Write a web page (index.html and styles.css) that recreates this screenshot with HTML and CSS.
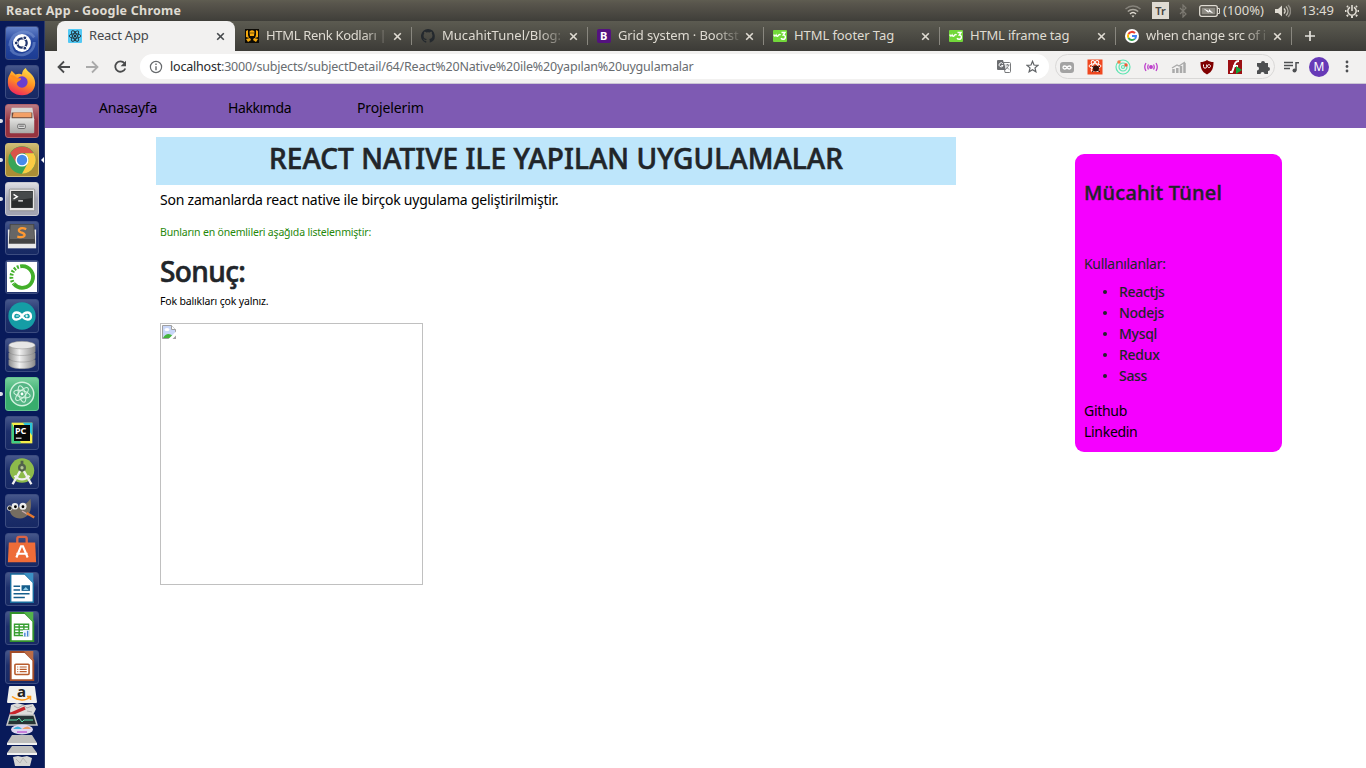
FILE: index.html
```html
<!DOCTYPE html>
<html lang="tr">
<head>
<meta charset="utf-8">
<title>React App</title>
<link rel="stylesheet" href="styles.css">
</head>
<body>
<svg width="0" height="0" class="defs">
  <defs>
    <linearGradient id="steel" x1="0" y1="0" x2="1" y2="0"><stop offset="0" stop-color="#8e8e8e"/><stop offset=".4" stop-color="#f2f2f2"/><stop offset="1" stop-color="#8a8a8a"/></linearGradient>
    <linearGradient id="flame" x1=".7" y1="0" x2=".3" y2="1"><stop offset="0" stop-color="#ffe14a"/><stop offset=".5" stop-color="#ff9322"/><stop offset="1" stop-color="#f0245e"/></linearGradient>
    <linearGradient id="grey" x1="0" y1="0" x2="0" y2="1"><stop offset="0" stop-color="#e4e4e2"/><stop offset="1" stop-color="#a9a9a7"/></linearGradient>
    <symbol id="x" viewBox="0 0 9 9"><path d="M1.200 1.200l6.600 6.600M7.800 1.200l-6.600 6.600" stroke="currentColor" stroke-width="1.600"/></symbol>
    <symbol id="w3" viewBox="0 0 14 12"><rect width="14" height="12" rx="1" fill="#72d83a"/><path d="M.8 4.500q1 2.800 2.300.5 1 2.400 2.300.3.800-1.300 2.200-.3M8.500 2.500H12L10.300 5c3 0 2.600 4.300-.2 4.300-1 0-1.700-.5-2-1.200" fill="none" stroke="#fff" stroke-width="1.400"/></symbol>
  </defs>
</svg>
<header class="panel">
  <span class="panel-title">React App - Google Chrome</span>
  <div class="tray">
    <svg class="i-wifi" width="18" height="14" viewBox="0 0 18 14" fill="none" stroke-width="1.500"><path d="M1.500 5C6 1 12 1 16.500 5" stroke="#85827a"/><path d="M3.800 7.500c3-2.800 7.400-2.800 10.400 0" stroke="#aaa79e"/><path d="M6 10c1.800-1.700 4.200-1.700 6 0" stroke="#dfdbd2"/><path d="M7.500 11.500h3L9 13.500z" fill="#dfdbd2"/></svg>
    <span class="kbd">Tr</span>
    <svg class="i-bt" width="8" height="14" viewBox="0 0 8 14" fill="none" stroke="#7d7a72" stroke-width="1.200"><path d="M1 4l6 6-3 3V1l3 3-6 6"/></svg>
    <svg class="i-bat" width="21" height="12" viewBox="0 0 21 12"><rect x=".7" y=".7" width="17.600" height="10.600" rx="2" fill="none" stroke="#dfdbd2" stroke-width="1.300"/><rect x="2.700" y="2.700" width="13.600" height="6.600" fill="#8d8a82"/><path d="M19 3.500h1.500v5H19" fill="none" stroke="#dfdbd2"/><path d="M4.500 3.500L10 6V4l4.500 4.500-5-2V8z" fill="#fff"/></svg>
    <span class="battery">(100%)</span>
    <svg class="i-vol" width="17" height="14" viewBox="0 0 17 14" fill="none" stroke="#dfdbd2" stroke-width="1.400"><path d="M1 5h3l4-3.500v11L4 9H1z" fill="#dfdbd2" stroke="none"/><path d="M10 4.500c1.500 1.500 1.500 3.500 0 5"/><path d="M12 2.500c2.600 2.700 2.600 6.300 0 9" stroke="#b5b2a9"/><path d="M14 1c3.300 3.700 3.300 8.300 0 12" stroke="#8d8a82"/></svg>
    <span class="clock">13:49</span>
    <svg class="i-gear" width="14" height="14" viewBox="0 0 14 14" fill="none" stroke="#dfdbd2"><path d="M5 3.300a4.200 4.200 0 1 0 4 0M7 1v6" stroke-width="1.600"/><path d="M1.500 7H0M14 7h-1.500M3 3L2 2M11 3l1-1M3 11l-1.200 1.200M11 11l1.200 1.200M7 12v2" stroke-width="2"/></svg>
  </div>
</header>
<div class="desktop">
<aside class="launcher">
  <div class="tile blue"><svg viewBox="0 0 34 34"><path d="M4 20C4 6 22 0 30 11M30 16c0 14-18 18-25 8M8 27C-1 14 12 3 24 6" fill="none" stroke="#7f9bd6" stroke-width="3" opacity=".5"/><circle cx="17" cy="17" r="9.500" fill="#fff"/><circle cx="17" cy="17" r="5" fill="none" stroke="#20356d" stroke-width="2.400"/><g fill="#20356d" stroke="#fff"><circle cx="10.800" cy="17" r="2"/><circle cx="20" cy="11.500" r="2"/><circle cx="20" cy="22.500" r="2"/></g></svg></div>
  <div class="tile"><svg viewBox="0 0 34 34"><path d="M3 11l3-6 4 4c3-1 5-1 7 0 0-3 2-6 4-7 2 5 10 7 10 16 0 8-6 13-14 13S2 26 2 18c0-3 0-5 1-7z" fill="url(#flame)"/><circle cx="17" cy="17" r="6" fill="#6b3ed0"/><path d="M4 10c4-1 6 1 8 3h4c0 3-4 3-5 6-3-3-4-6-7-9z" fill="#ff8a1e"/></svg></div>
  <div class="tile red run"><svg viewBox="0 0 34 34"><path d="M6 3h22l2 13H4z" fill="#d8d8d6"/><path d="M6 8h22v7H6z" fill="#68483c"/><path d="M8 8h19v5H7z" fill="#f3a067"/><rect x="4" y="14" width="26" height="16" rx="1" fill="url(#grey)"/><rect x="12.500" y="20.500" width="8" height="4.500" rx="1" fill="#ddd" stroke="#666"/><path d="M14 22.500h5" stroke="#555"/></svg></div>
  <div class="tile gold run active"><svg viewBox="0 0 34 34"><circle cx="17" cy="17" r="14.500" fill="#38a557"/><path d="M4.500 9.700a14.500 14.500 0 0 1 25 0H17a7 7 0 0 0-6 3.500v7z" fill="#d9544a"/><path d="M29.500 9.700A14.500 14.500 0 0 1 17 31.500l6-11A7 7 0 0 0 23 13.500L20 9.700z" fill="#fbcb43"/><circle cx="17" cy="17" r="7" fill="#fff"/><circle cx="17" cy="17" r="5.500" fill="#478bea"/></svg></div>
  <div class="tile silver run"><svg viewBox="0 0 34 34"><rect x="3.500" y="6.500" width="27" height="23" rx="1" fill="#e6e6e6" stroke="#909090"/><path d="M5.500 8.500h23v18h-23z" fill="#292c2d"/><path d="M6 9h22v7L6 19z" fill="#464a4b"/><path d="M8 12l4 2.500L8 17M13 19h5" fill="none" stroke="#fff" stroke-width="1.500"/></svg></div>
  <div class="tile"><svg viewBox="0 0 34 34"><path d="M2 8h30v20H2z" fill="#e9e9e9"/><path d="M4 2h26l1 21H3z" fill="#444"/><path d="M5 3h24l1 15H4z" fill="#666"/><path d="M21.500 7.500c-7-3-10.500 2-5.500 3.500 6 1.500 5 6.500-4 4.500" fill="none" stroke="#ff9a32" stroke-width="2.500"/></svg></div>
  <div class="tile"><svg viewBox="0 0 34 34"><path d="M1 1h32v32H1z" fill="#fff"/><path d="M17 5.500a11.500 11.500 0 1 1-8.500 19" fill="none" stroke="#43b02a" stroke-width="4"/><path d="M17 5.500A11.500 11.500 0 0 0 8.500 24.500" fill="none" stroke="#43b02a" stroke-width="4" stroke-dasharray="2 1.500"/></svg></div>
  <div class="tile"><svg viewBox="0 0 34 34"><circle cx="17" cy="17" r="14.500" fill="#159da5"/><path d="M17 17c-3-5-9-5-9.500 0S14 22 17 17s9-5 9.500 0S20 22 17 17z" fill="none" stroke="#fff" stroke-width="2.500"/><path d="M10.500 17h3M20.500 17h3M22 15.500v3" stroke="#fff"/></svg></div>
  <div class="tile"><svg viewBox="0 0 34 34"><g fill="url(#steel)" stroke="#888" stroke-width=".5"><path d="M3 22v5c0 6 28 6 28 0v-5z"/><path d="M3 15v5c0 6 28 6 28 0v-5z"/><path d="M3 7v6c0 6 28 6 28 0V7z"/><ellipse cx="17" cy="6.500" rx="14" ry="4" fill="#e6e6e6"/></g></svg></div>
  <div class="tile green run"><svg viewBox="0 0 34 34"><circle cx="17" cy="17" r="12.500" fill="#55b585" stroke="#d3f3df" stroke-width="1.500"/><g fill="none" stroke="#d3f3df" stroke-width="1.100"><ellipse cx="17" cy="17" rx="9" ry="3.500" transform="rotate(15 17 17)"/><ellipse cx="17" cy="17" rx="9" ry="3.500" transform="rotate(75 17 17)"/><ellipse cx="17" cy="17" rx="9" ry="3.500" transform="rotate(135 17 17)"/></g><circle cx="17" cy="17" r="1.500" fill="#fff"/></svg></div>
  <div class="tile"><svg viewBox="0 0 34 34"><path d="M6 6h22v22H6z" fill="#f5ed49"/><path d="M18 6h10v14z" fill="#2ac2da"/><path d="M6 6v22h10z" fill="#40cf83"/><path d="M8.500 8.500h17v17h-17z" fill="#080808"/><path d="M10.500 22.500h6" stroke="#fff" stroke-width="1.200"/><text x="9.500" y="18.500" class="t-pc">PC</text></svg></div>
  <div class="tile"><svg viewBox="0 0 34 34"><circle cx="17" cy="15.500" r="13" fill="#8dbb4b"/><circle cx="17" cy="12.500" r="3" fill="#b5c597" stroke="#52634c" stroke-width="2.500"/><path d="M17 5v4" stroke="#52634c" stroke-width="3"/><path d="M15 16L7 30M19 16l8 14M9 21c5 5 11 5 16 0" fill="none" stroke="#f0f0f0" stroke-width="2.500"/></svg></div>
  <div class="tile"><svg viewBox="0 0 34 34"><path d="M5 12c7 3 15 0 21-8 2 12-1 20-11 21C7 25 2 19 5 12z" fill="#756d61"/><circle cx="9.500" cy="12" r="3.500" fill="#eee"/><circle cx="18" cy="12" r="3.800" fill="#eee"/><circle cx="10" cy="12.500" r="1.500"/><circle cx="18" cy="12.500" r="1.500"/><circle cx="4" cy="14" r="2.500" fill="#222" stroke="#ddd"/><path d="M17 17l7 4" stroke="#caa" stroke-width="1.500"/><path d="M22 19l8 5" stroke="#e57a30" stroke-width="2.500"/></svg></div>
  <div class="tile"><svg viewBox="0 0 34 34"><path d="M12 11V5q0-2 2-2h6q2 0 2 2v6" fill="none" stroke="#dc6445" stroke-width="2.500"/><path d="M3 9h28l1 21H2z" fill="#ee6c38"/><path d="M11 25l5-12h2l5 12M11 21h12" fill="none" stroke="#fff" stroke-width="2.300"/></svg></div>
  <div class="tile"><svg viewBox="0 0 34 34"><path d="M5 1h15l9 9v21H5z" fill="#fff" stroke="#176b9d" stroke-width="1.500"/><path d="M19 0h10v11z" fill="#3b91c4"/><path d="M8 14h7M8 18h7M8 22h17M8 26h12" stroke="#155e8c" stroke-width="1.700"/><path d="M16.500 13h9v6h-9z" fill="#155e8c"/><path d="M18 18l3-3 3 3z" fill="#8ccbe8"/></svg></div>
  <div class="tile"><svg viewBox="0 0 34 34"><path d="M5 1h15l9 9v21H5z" fill="#fff" stroke="#33912b" stroke-width="2"/><path d="M19 0h10v11z" fill="#53b34b"/><path d="M9 13h15v12H9zM9 16h15M9 19h15M9 22h15M14 13v12M19 13v12" fill="none" stroke="#369e30" stroke-width="1.500"/><path d="M18 19h7v7h-7z" fill="#eef6ff"/><path d="M20 26v-4M23 26v-6" stroke="#4a86d5" stroke-width="1.500"/></svg></div>
  <div class="tile"><svg viewBox="0 0 34 34"><path d="M5 1h15l9 9v21H5z" fill="#fff" stroke="#a44d28" stroke-width="2"/><path d="M19 0h10v11z" fill="#bb6c46"/><rect x="9.500" y="14" width="15" height="11" rx="1" fill="#fff" stroke="#b85c2d" stroke-width="1.700"/><path d="M12 17h1M14.500 17h7.500M12 19.500h1M14.500 19.500h7.500M12 22h1M14.500 22h7.500" stroke="#b85c2d" stroke-width="1.300"/></svg></div>
  <svg class="stack" width="34" height="83" viewBox="0 0 34 83">
    <path d="M5 2h24q1 0 1 1l2 15q0 1-1 1H3q-1 0-1-1L4 3q0-1 1-1z" fill="#f1f1ee"/><text x="12" y="12.500" class="t-amazon">a</text><path d="M7 12.500c6 4.500 14 4.500 18 .5M25.500 16v-3.500H22" fill="none" stroke="#ff9917" stroke-width="1.500"/>
    <path d="M6 21l6-2 8 2 8-1 3 5-3 6H6l-1-4z" fill="#dcdcda"/><path d="M9 22l4 2 5-3 4 3 5-2M22 27l5 1" fill="none" stroke="#aaa"/><path d="M5 30.500L20 24" stroke="#c9252b" stroke-width="3.500"/>
    <path d="M5 31h24l3 10H2z" fill="#263334" stroke="#c8c8c8" stroke-width="1.500"/><path d="M4 36h8l2-2 3 4 2-2h9" fill="none" stroke="#60dfad"/>
    <ellipse cx="17" cy="45.500" rx="11" ry="5" fill="#ddd7f0"/><path d="M8 45q5-5 9 0z" fill="#43b5de"/><path d="M17 45q6-5 9 0z" fill="#eda06d"/><path d="M12 48h10" stroke="#c77fda" stroke-width="2"/>
    <path d="M7 51h20l5 8H2z" fill="#bebebc"/><path d="M2 59h30v2H2z" fill="#f0f0f0"/><path d="M7 62h20l5 7H2z" fill="#bebebc"/><path d="M2 69h30v2H2z" fill="#f0f0f0"/>
    <path d="M8 73l5-1 4 1 5-1 5 2-2 8H10z" fill="#d5d5d3"/><path d="M11 75l4 4 3-5 4 5" fill="none" stroke="#b5b5b5"/>
  </svg>
</aside>
<main class="window">
  <div class="tabs">
    <div class="tab current"><svg width="14" height="14" viewBox="0 0 14 14"><rect width="14" height="14" rx="1" fill="#52c8f4"/><g fill="none" stroke="#20333d" stroke-width=".9"><ellipse cx="7" cy="7" rx="5.800" ry="2.300"/><ellipse cx="7" cy="7" rx="5.800" ry="2.300" transform="rotate(60 7 7)"/><ellipse cx="7" cy="7" rx="5.800" ry="2.300" transform="rotate(120 7 7)"/></g><circle cx="7" cy="7" r="1.200" fill="#20333d"/></svg><span class="tab-name n1">React App</span><svg class="close"><use href="#x"/></svg></div>
    <div class="tab"><svg width="14" height="14" viewBox="0 0 14 14"><path d="M0 0h14v14H0z" fill="#0c0a05"/><g fill="#f5a90d"><path d="M4.500 2.500Q7 0 9.500 2.500L9 7H5zM1 2l2-1v5l1 3-3-1zM13 2l-2-1v5l-1 3 3-1zM1 10l4-1 1 2-3 2zM13 10L9 9l-1 2 3 2z"/></g><path d="M5.500 3.500h1v1h-1zM7.500 3.500h1v1h-1z"/></svg><span class="tab-name n2 fade">HTML Renk Kodları |</span><svg class="close"><use href="#x"/></svg></div>
    <div class="tab"><svg width="14" height="14" viewBox="0 0 16 16"><path d="M8 0a8 8 0 0 0-2.500 15.600c.4 0 .5-.2.500-.4v-1.500c-2.200.5-2.700-1-2.700-1-.4-.9-.9-1.200-.9-1.200-.7-.5.100-.5.100-.5.800.1 1.200.8 1.200.8.700 1.300 1.900.9 2.300.7.100-.5.300-.9.500-1.100-1.800-.2-3.600-.9-3.600-4 0-.9.300-1.600.8-2.100-.1-.2-.4-1 .1-2.100 0 0 .7-.2 2.200.8a7.600 7.600 0 0 1 4 0c1.500-1 2.200-.8 2.200-.8.400 1.100.2 1.900.1 2.100.5.600.8 1.300.8 2.200 0 3.100-1.900 3.700-3.700 3.900.3.300.6.800.6 1.500v2.200c0 .2.100.5.500.4A8 8 0 0 0 8 0z" fill="#24292e"/></svg><span class="tab-name n3 fade">MucahitTunel/Blog:</span><svg class="close"><use href="#x"/></svg></div>
    <div class="tab"><svg width="14" height="14" viewBox="0 0 14 14"><rect width="14" height="14" rx="2" fill="#54127f"/><text x="3" y="11" class="t-b">B</text></svg><span class="tab-name n4 fade">Grid system · Bootst</span><svg class="close"><use href="#x"/></svg></div>
    <div class="tab"><svg width="14" height="12"><use href="#w3"/></svg><span class="tab-name n5">HTML footer Tag</span><svg class="close"><use href="#x"/></svg></div>
    <div class="tab"><svg width="14" height="12"><use href="#w3"/></svg><span class="tab-name n6">HTML iframe tag</span><svg class="close"><use href="#x"/></svg></div>
    <div class="tab"><svg width="14" height="14" viewBox="0 0 14 14"><circle cx="7" cy="7" r="7" fill="#fff"/><g fill="none" stroke-width="2"><path d="M3.500 5A4 4 0 0 1 10 4.200" stroke="#ea4335"/><path d="M3.500 9a4 4 0 0 1 0-4" stroke="#fbbc05"/><path d="M9.800 9.900A4 4 0 0 1 3.500 9" stroke="#34a853"/><path d="M7 7h4a4 4 0 0 1-1.200 2.900" stroke="#4285f4"/></g></svg><span class="tab-name n7 fade">when change src of i</span><svg class="close"><use href="#x"/></svg></div>
    <svg class="plus" width="12" height="12"><path d="M6 1v10M1 6h10" stroke="#e4e2dc" stroke-width="1.700"/></svg>
  </div>
  <div class="toolbar">
    <svg class="nav-icons" width="72" height="14" viewBox="0 0 72 14" fill="none" stroke-width="1.800"><path d="M13 7H2M7 1.500L1.500 7 7 12.500" stroke="#4a4b4c"/><path d="M29 7h11M35 1.500L40.500 7 35 12.500" stroke="#aaa"/><path d="M67.500 3.200A5.200 5.200 0 1 0 68.300 8.500" stroke="#4a4b4c"/><path d="M69 .8v5.400h-5.400z" fill="#4a4b4c"/></svg>
    <div class="omnibox">
      <svg width="14" height="14" viewBox="0 0 14 14"><circle cx="7" cy="7" r="5.600" fill="none" stroke="#66696c" stroke-width="1.200"/><path d="M7 6.200v4M7 3.600v1.500" stroke="#66696c" stroke-width="1.400"/></svg>
      <span class="url"><b>localhost</b>:3000/subjects/subjectDetail/64/React%20Native%20ile%20yapılan%20uygulamalar</span>
      <svg class="translate" width="14" height="13" viewBox="0 0 14 13"><path d="M6.500 2.500h6q1 0 1 1v8q0 1-1 1H8z" fill="#fff" stroke="#77797b"/><path d="M1 0h5l3 10H1q-1 0-1-1V1q0-1 1-1z" fill="#6b6d70"/><path d="M5.800 3.800A2 2 0 1 0 6 5.500H4.300" fill="none" stroke="#fff"/><path d="M8.500 5h4M10.500 4v1M9 9c1.500-1 2.300-2.500 2.500-4M9 6.500l3 3" fill="none" stroke="#77797b" stroke-width=".9"/></svg>
      <svg class="star" width="13" height="13" viewBox="0 0 13 13"><path d="M6.500 1.300l1.500 3.700 4 .3-3 2.600.9 3.900-3.400-2.100-3.400 2.100.9-3.900-3-2.600 4-.3z" fill="none" stroke="#606366" stroke-width="1.200"/></svg>
    </div>
    <div class="exts">
      <svg viewBox="0 0 16 16"><rect x="1" y="3" width="14" height="11" rx="3" fill="#a3a3a3"/><path d="M8 8.500c-1-2-4-2-4 0s3 2 4 0 4-2 4 0-3 2-4 0z" fill="none" stroke="#fff" stroke-width="1.300"/></svg>
      <svg viewBox="0 0 16 16"><path d="M.5.500h15v15H.5z" fill="#f0471f"/><g fill="none" stroke="#fff"><ellipse cx="8" cy="7" rx="6" ry="2.300"/><ellipse cx="8" cy="7" rx="6" ry="2.300" transform="rotate(60 8 7)"/><ellipse cx="8" cy="7" rx="6" ry="2.300" transform="rotate(120 8 7)"/></g><circle cx="9" cy="9.500" r="3" fill="#35120c"/><path d="M5 7l8 6M13 7l-8 6" stroke="#35120c"/></svg>
      <svg viewBox="0 0 16 16"><g fill="none" stroke="#5de5b2" stroke-width="1.200"><circle cx="8" cy="8" r="7"/><circle cx="8" cy="8" r="4"/><circle cx="8" cy="8" r="1.500"/></g><circle cx="4" cy="3" r="1.700" fill="#f47c48"/><circle cx="11" cy="6" r="1.700" fill="#f05a35"/></svg>
      <svg viewBox="0 0 16 16" fill="none" stroke="#bd3fcb" stroke-width="1.300"><circle cx="8" cy="8" r="1.300" fill="#bd3fcb"/><path d="M5.500 5.500q-1.500 2.500 0 5M10.500 5.500q1.500 2.500 0 5M3 4q-2.500 4 0 8M13 4q2.500 4 0 8"/></svg>
      <svg viewBox="0 0 16 16"><path d="M2.500 14v-4M6.300 14V9M10 14V7M13.500 14V4" stroke="#aaa" stroke-width="2.500"/><path d="M1 9l5-3 2 1 6-4" fill="none" stroke="#aaa" stroke-width="1.300"/></svg>
      <svg viewBox="0 0 16 16"><path d="M8 1c2 1.500 4 2 6.500 2 0 6-1 9.500-6.500 12.500C2.500 12.500 1.500 9 1.500 3 4 3 6 2.500 8 1z" fill="#800000"/><path d="M4.500 5.500v2q0 1.700 1.600 1.700t1.600-1.700v-2M11.500 7.300a1.500 1.500 0 1 0-.1.400z" fill="none" stroke="#fff"/></svg>
      <svg viewBox="0 0 16 16"><path d="M1 1h14v14H1z" fill="#9c0f13"/><path d="M12 2C7 2 8 7 5 13H3M6 7h5" fill="none" stroke="#fff" stroke-width="2"/><path d="M9 7l6 4-6 4z" fill="#13a33c"/></svg>
      <svg viewBox="0 0 16 16"><path d="M2 4h4a2 2 0 0 1 4 0h3v4a2 2 0 0 1 0 4v3h-3.500a2 2 0 0 0-4 0H2v-3.500a2 2 0 0 0 0-4z" fill="#4d4f51"/></svg>
    </div>
    <svg class="media" width="15" height="12" viewBox="0 0 15 12"><path d="M0 1.500h9M0 4.500h9M0 7.500h6M12 1v8.500M12 1.800h3" stroke="#4d4f51" stroke-width="1.500"/><circle cx="10.500" cy="9.500" r="2" fill="#4d4f51"/></svg>
    <span class="avatar">M</span>
    <svg class="dots" width="4" height="13" fill="#4d4f51"><circle cx="2" cy="2" r="1.400"/><circle cx="2" cy="6.500" r="1.400"/><circle cx="2" cy="11" r="1.400"/></svg>
  </div>
  <nav class="site-nav"><a class="a1">Anasayfa</a><a class="a2">Hakkımda</a><a class="a3">Projelerim</a></nav>
  <div class="page">
    <article class="subject">
      <h1>REACT NATIVE ILE YAPILAN UYGULAMALAR</h1>
      <div class="content">
        <p class="lead">Son zamanlarda react native ile birçok uygulama geliştirilmiştir.</p>
        <p class="note">Bunların en önemlileri aşağıda listelenmiştir:</p>
        <h2>Sonuç:</h2>
        <p class="small">Fok balıkları çok yalnız.</p>
        <div class="missing"><svg width="16" height="16" viewBox="0 0 16 16"><path d="M1.500 1.500h9l4 4V10l-6 4.500h-7z" fill="#c8d6f8" stroke="#a0a0a0"/><path d="M10.500 1.500v4h4" fill="#fff" stroke="#a0a0a0"/><ellipse cx="6" cy="5.500" rx="2.500" ry="1.500" fill="#fff"/><path d="M2 14q4-7 10-2l-3 2z" fill="#44b53c"/><path d="M15 7.500v8H7z" fill="#fff"/><path d="M15 11.500V15h-3.500z" fill="#a0a0a0"/></svg></div>
      </div>
    </article>
    <aside class="card">
      <h3>Mücahit Tünel</h3>
      <p class="used">Kullanılanlar:</p>
      <ul><li>Reactjs</li><li>Nodejs</li><li>Mysql</li><li>Redux</li><li>Sass</li></ul>
      <a>Github</a><a>Linkedin</a>
    </aside>
  </div>
</main>
</div>
</body>
</html>
```
FILE: styles.css
```css
* { box-sizing: border-box; }
body { margin: 0; width: 1366px; height: 768px; overflow: hidden; background: #fff; font-family: "Noto Sans", "Open Sans", sans-serif; font-size: 14px; line-height: 21px; color: #212529; }
h1, h2, h3, p, ul { margin: 0; padding: 0; font-weight: 500; }
svg { display: block; flex: none; }
.defs { position: absolute; }
.panel { height: 21px; padding: 0 7px 0 6px; display: flex; align-items: center; justify-content: space-between; background: linear-gradient(#5f5d51, #59564d 15%, #3f3e39); color: #dfdbd2; font-size: 13px; }
.panel-title { font-weight: 700; font-size: 12.5px; letter-spacing: .24px; }
.tray { display: flex; align-items: center; white-space: nowrap; }
.kbd { width: 17px; height: 17px; margin: 0 18px 0 10px; background: #dfdbd2; color: #45443e; font-size: 11px; line-height: 17px; font-weight: 600; text-align: center; }
.i-bt { margin: 0 12px 0 -8px; }
.battery { width: 41px; margin-left: 3px; }
.i-vol { margin: 0 10px 0 10px; }
.clock { width: 33px; margin-right: 11px; letter-spacing: -.1px; }
.desktop { display: flex; height: 747px; }
.launcher { width: 45px; padding: 5px 0 0 5px; display: flex; flex-direction: column; gap: 5px; background: #081a5a; border-right: 1px solid #2c3a68; }
.tile { position: relative; width: 34px; height: 34px; flex: none; border-radius: 3px; background: linear-gradient(#46578b, #1d2f6c 45%, #172964); border: 1px solid #3c4c80; }
.tile > svg { width: 32px; height: 32px; }
.t-pc { font-weight: 700; font-size: 9.5px; fill: #fff; }
.t-amazon { font-weight: 700; font-size: 15px; fill: #222; }
.t-b { font-weight: 700; font-size: 11px; fill: #fff; }
.blue { background: linear-gradient(#6583c8, #2647a0 45%, #1c3c93); }
.red { background: linear-gradient(#ba7a83, #95323f 50%); border-color: #b0636d; }
.gold { background: linear-gradient(#d0bd76, #aa8d35 50%); border-color: #d0bd76; }
.silver { background: linear-gradient(#dedee3, #a2a4b2 50%); border-color: #c7c8d0; }
.green { background: linear-gradient(#77cf9d, #38ad6d 50%); border-color: #63c48f; }
.run::before { content: ""; position: absolute; left: -6px; top: 14px; width: 3px; height: 4px; background: #dcdfe7; border-radius: 0 2px 2px 0; }
.active::after { content: ""; position: absolute; right: -6px; top: 13px; border: 3px solid transparent; border-right-color: #fff; border-left: 0; }
.stack { margin-top: -5px; }
.window { width: 1321px; }
.tabs { height: 30px; padding-left: 12px; display: flex; background: linear-gradient(#5c5b51, #3c3b37); color: #dfdbd2; }
.tab { position: relative; width: 176px; padding: 0 10px 0 9px; display: flex; align-items: center; font-size: 13px; }
.tab:not(.current)::after { content: ""; position: absolute; right: 0; top: 6px; width: 1px; height: 18px; background: #89877f; }
.current { width: 178px; padding: 0 10px 0 11px; background: #f2f1f0; color: #45484b; border-radius: 8px 8px 0 0; margin-right: 1px; }
.tab-name { width: 121px; margin: -2px 0 0 7px; white-space: nowrap; flex: none; }
.n1 { letter-spacing: -.2px; }
.n2 { letter-spacing: -.32px; }
.n3 { letter-spacing: .02px; }
.n4 { letter-spacing: -.12px; }
.n5 { letter-spacing: -.08px; }
.n6 { letter-spacing: -.18px; }
.n7 { letter-spacing: -.28px; }
.fade { -webkit-mask-image: linear-gradient(90deg, #000 80%, rgba(0,0,0,.15) 100%); mask-image: linear-gradient(90deg, #000 80%, rgba(0,0,0,.15) 100%); }
.close { width: 9px; height: 9px; margin-left: auto; }
.plus { margin: 9px 0 0 12px; }
.toolbar { height: 33px; padding: 0 0 1px 12px; display: flex; align-items: center; background: #f2f1f0; border-bottom: 1px solid #cbc5d4; }
.omnibox { width: 909px; height: 25px; margin-left: 11px; padding: 0 10px 0 9px; display: flex; align-items: center; border-radius: 13px; background: #fff; font-size: 12.5px; color: #686c70; }
.url { margin-left: 7px; white-space: nowrap; letter-spacing: -.2px; }
.url b { font-weight: 400; color: #26282a; }
.translate { margin-left: auto; }
.star { margin: 0 0 0 15px; }
.exts { width: 220px; height: 25px; margin-left: 6px; padding: 0 3px; display: flex; align-items: center; gap: 12px; border: 1px solid #d9d8d7; border-radius: 13px; }
.exts svg { width: 16px; height: 16px; }
.media { margin-left: 9px; }
.avatar { width: 20px; height: 20px; margin-left: 10px; border-radius: 50%; background: #673ab7; color: #fff; font-size: 12px; line-height: 20px; text-align: center; }
.dots { margin-left: 16px; }
.site-nav { height: 44px; display: flex; align-items: center; padding: 3px 0 0 54px; background: #7e5ab3; color: #000; }
.site-nav a { width: 129px; }
.a1 { letter-spacing: -.22px; }
.a2 { letter-spacing: -.4px; }
.a3 { letter-spacing: -.12px; }
.page { display: flex; align-items: flex-start; }
.subject { width: 800px; margin: 9px 119px 0 111px; }
h1 { height: 48px; background: #bee6fb; font-size: 28px; line-height: 43px; text-align: center; white-space: nowrap; letter-spacing: .07px; -webkit-text-stroke: .6px #212529; }
.content { padding: 4px 0 0 4px; color: #000; }
.content p { font-weight: 400; }
.lead { letter-spacing: -.23px; }
.note { margin-top: 14px; font-size: 10.5px; line-height: 16px; color: #26880a; letter-spacing: -.19px; }
h2 { margin-top: 14px; color: #212529; font-size: 28px; line-height: 34px; letter-spacing: -.6px; -webkit-text-stroke: .6px #212529; }
.small { margin-top: 5px; font-size: 10.5px; line-height: 16px; letter-spacing: -.16px; }
.missing { width: 263px; height: 262px; margin-top: 14px; border: 1px solid #c0c0c0; }
.card { width: 207px; height: 298px; margin-top: 26px; padding: 26px 9px 0; border-radius: 9px; background: #f500ff; letter-spacing: -.3px; }
h3 { font-size: 20px; line-height: 25px; letter-spacing: .22px; -webkit-text-stroke: .4px #212529; }
.used { margin-top: 48px; font-weight: 400; }
ul { margin: 7px 0 14px; padding-left: 35px; list-style: none; }
li { position: relative; }
li::before { content: ""; position: absolute; left: -16px; top: 9px; width: 4px; height: 4px; border-radius: 50%; background: #212529; }
.card a { display: block; color: #000; }
```
